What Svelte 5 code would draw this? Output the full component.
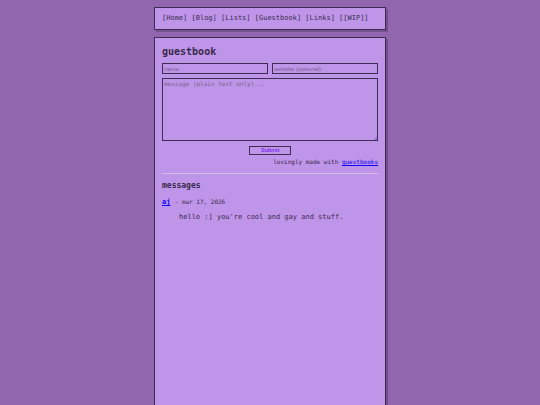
<script>
    let links = [
        { label: "Home", href: "#home" },
        { label: "Blog", href: "#blog" },
        { label: "Lists", href: "#lists" },
        { label: "Guestbook", href: "#guestbook" },
        { label: "Links", href: "#links" },
        { label: "[WIP]", href: "#wip" }
    ];
    let messages = $state([
        { name: "aj", date: "mar 17, 2026", text: "hello :] you're cool and gay and stuff." }
    ]);
    let name = $state("");
    let website = $state("");
    let text = $state("");

    function sign(e) {
        e.preventDefault();
        if (!name.trim() || !text.trim()) return;
        messages.unshift({ name, date: "just now", text });
        name = "";
        website = "";
        text = "";
    }
</script>

<div class="page">
    <nav class="box">
        {#each links as link}
            <a href={link.href}>[{link.label}]</a>{" "}
        {/each}
    </nav>

    <main class="box">
        <h1>guestbook</h1>
        <form onsubmit={sign}>
            <div class="fields">
                <input type="text" aria-label="name" placeholder="name" bind:value={name}>
                <input type="text" aria-label="website" placeholder="website (optional)" bind:value={website}>
            </div>
            <textarea aria-label="message" placeholder="message (plain text only)..." bind:value={text}></textarea>
            <button type="submit">Submit</button>
        </form>
        <p class="credit">lovingly made with <a href="#guestbooks">guestbooks</a></p>
        <hr>
        <h2>messages</h2>
        {#each messages as message}
            <article>
                <div class="who">
                    <a href="#aj">{message.name}</a>
                    <span>- {message.date}</span>
                </div>
                <p>{message.text}</p>
            </article>
        {/each}
    </main>
</div>

<style>
    :global(body) {
        background-color: #9265af;
    }
    .page {
        box-sizing: border-box;
        max-width: 232px;
        min-height: 100vh;
        margin: 0 auto;
        padding-top: 7px;
        display: flex;
        flex-direction: column;
        gap: 7px;
        font-family: "DejaVu Sans Mono", monospace;
        font-size: 7px;
        line-height: 9px;
        color: #3a2a4c;
    }
    .box {
        background-color: #be95e8;
        border: 1px solid #3f2c52;
        box-shadow: 2px 2px 0 #71508c;
        padding: 7px;
    }
    nav {
        line-height: 7px;
        white-space: nowrap;
    }
    nav a {
        color: inherit;
        text-decoration: none;
    }
    main {
        flex: 1;
    }
    main.box {
        border-bottom: 0;
    }
    h1 {
        margin: 0 0 5px;
        font-size: 10px;
        line-height: 13px;
    }
    form {
        display: flex;
        flex-direction: column;
        gap: 4px;
    }
    .fields {
        display: grid;
        grid-template-columns: 1fr 1fr;
        gap: 4px;
    }
    input, textarea, button {
        box-sizing: border-box;
        min-width: 0;
        margin: 0;
        border: 1px solid #3f2c52;
        border-radius: 0;
        background-color: transparent;
        color: #3a2a4c;
        font-family: "Liberation Sans", sans-serif;
        font-size: 6px;
    }
    input {
        height: 11px;
        padding: 1px;
    }
    textarea {
        height: 63px;
        padding: 1px;
        font-family: "DejaVu Sans Mono", monospace;
        resize: vertical;
    }
    textarea::-webkit-resizer {
        background: linear-gradient(135deg, transparent 60%, #9a7ac0 60%) right bottom / 4px 4px no-repeat;
    }
    ::placeholder {
        color: #7a658f;
    }
    button {
        align-self: center;
        width: 42px;
        height: 9px;
        margin-top: 1px;
        padding: 0;
        line-height: 7px;
        color: #6a00f0;
    }
    a {
        color: #0c00f0;
    }
    .credit {
        margin: 2px 0 7px;
        font-size: 6px;
        text-align: right;
    }
    hr {
        margin: 0;
        border: 0;
        border-top: 1px solid #d5bfe6;
    }
    h2 {
        margin: 7px 0 6px;
        font-size: 8px;
        line-height: 10px;
    }
    .who a {
        font-weight: bold;
    }
    .who span {
        font-size: 6px;
    }
    article p {
        margin: 6px 17px;
    }
</style>
